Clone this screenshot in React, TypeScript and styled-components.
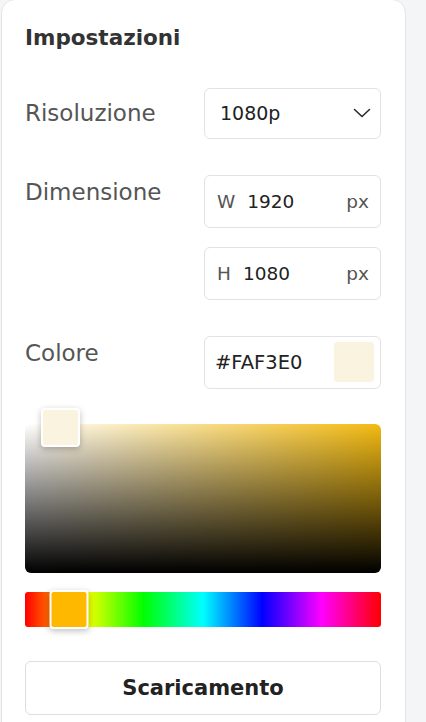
import React from "react";
import styled, { createGlobalStyle } from "styled-components";

const GlobalStyle = createGlobalStyle`
  html, body {
    margin: 0;
    padding: 0;
    background: #f4f5f6;
    font-family: "DejaVu Sans", "Noto Sans", sans-serif;
    overflow: hidden;
  }
  * { box-sizing: border-box; }
`;

const HUE = 44;

export default function App() {
    return (
        <Page>
            <GlobalStyle />
            <Card>
                <Title>Impostazioni</Title>

                <Row $align="center">
                    <Label>Risoluzione</Label>
                    <Select>
                        <Value $size={19}>1080p</Value>
                        <Chevron width="18" height="10" viewBox="0 0 18 10">
                            <path d="M1.5 1.5 L9 8.5 L16.5 1.5" fill="none" stroke="#2a2a2a" strokeWidth="1.6" strokeLinecap="round" strokeLinejoin="round" />
                        </Chevron>
                    </Select>
                </Row>

                <Row $gap={36}>
                    <Label $top>Dimensione</Label>
                    <FieldStack>
                        <Field>
                            <Prefix>W</Prefix>
                            <Value>1920</Value>
                            <Unit>px</Unit>
                        </Field>
                        <Field>
                            <Prefix>H</Prefix>
                            <Value>1080</Value>
                            <Unit>px</Unit>
                        </Field>
                    </FieldStack>
                </Row>

                <Row $gap={36}>
                    <Label $top>Colore</Label>
                    <ColorField>
                        <HexValue>#FAF3E0</HexValue>
                        <Swatch $color="#FAF3E0" />
                    </ColorField>
                </Row>

                <Picker $hue={HUE}>
                    <PickerHandle $color="#FAF3E0" />
                </Picker>

                <HueBar>
                    <HueHandle style={{ left: `${(HUE / 360) * 100}%` }} $color="#FFB800" />
                </HueBar>

                <DownloadButton>Scaricamento</DownloadButton>
            </Card>
        </Page>
    );
}

const Page = styled.div`
    width: 426px;
    height: 722px;
    padding-left: 1px;
    overflow: hidden;
    background: #f4f5f6;
`;

const Card = styled.div`
    width: 405px;
    height: 760px;
    margin-top: -1px;
    background: #ffffff;
    border: 1px solid #e4e5e6;
    border-radius: 14px;
    padding: 25px 24px 0 23px;
`;

const Title = styled.h2`
    margin: 0;
    font-size: 21.5px;
    line-height: 26px;
    font-weight: 700;
    color: #333333;
`;

const Row = styled.div<{ $align?: string; $gap?: number }>`
    display: grid;
    grid-template-columns: 179px 1fr;
    align-items: ${p => p.$align || "start"};
    margin-top: ${p => p.$gap ?? 36.5}px;
`;

const Label = styled.div<{ $top?: boolean }>`
    font-size: 23px;
    line-height: 28px;
    color: #555555;
    padding-top: ${p => (p.$top ? 3 : 0)}px;
`;

const Box = styled.div`
    display: flex;
    align-items: center;
    height: 53px;
    background: #ffffff;
    border: 1px solid #e2e2e2;
    border-radius: 6px;
`;

const Select = styled(Box)`
    height: 51px;
    padding: 0 9px 0 15px;
    justify-content: space-between;
`;

const Chevron = styled.svg`
    display: block;
`;

const FieldStack = styled.div`
    display: flex;
    flex-direction: column;
    gap: 19px;
`;

const Field = styled(Box)`
    padding: 0 11px 0 12px;
`;

const Value = styled.span<{ $size?: number }>`
    font-size: ${p => p.$size ?? 18.5}px;
    color: #222222;
`;

const Prefix = styled.span`
    font-size: 18.5px;
    color: #555555;
    margin-right: 12px;
`;

const Unit = styled.span`
    margin-left: auto;
    font-size: 18.5px;
    color: #555555;
`;

const ColorField = styled(Box)`
    padding: 0 6px 0 10px;
    justify-content: space-between;
`;

const HexValue = styled.span`
    font-size: 19.5px;
    color: #222222;
`;

const Swatch = styled.div<{ $color: string }>`
    width: 40px;
    height: 40px;
    border-radius: 4px;
    background: ${p => p.$color};
`;

const Picker = styled.div<{ $hue: number }>`
    position: relative;
    height: 149px;
    margin-top: 35.5px;
    border-radius: 6px;
    background:
        linear-gradient(to top, #000000, rgba(0, 0, 0, 0)),
        linear-gradient(to right, #ffffff, hsl(${p => p.$hue + 1}, 90%, 51%));
`;

const Handle = styled.div<{ $color: string }>`
    position: absolute;
    width: 39px;
    height: 39px;
    border: 2px solid #ffffff;
    border-radius: 4px;
    background: ${p => p.$color};
    box-shadow: 0 2px 6px rgba(0, 0, 0, 0.25);
`;

const PickerHandle = styled(Handle)`
    left: 16px;
    top: -16px;
`;

const HueBar = styled.div`
    position: relative;
    height: 35px;
    margin-top: 19px;
    border-radius: 3px;
    background: linear-gradient(
        to right,
        #ff0000 0%,
        #ffff00 16.66%,
        #00ff00 33.33%,
        #00ffff 50%,
        #0000ff 66.66%,
        #ff00ff 83.33%,
        #ff0000 100%
    );
`;

const HueHandle = styled(Handle)`
    top: -2px;
    transform: translateX(-50%);
`;

const DownloadButton = styled.button`
    display: block;
    width: 100%;
    height: 54px;
    margin-top: 34px;
    background: #ffffff;
    border: 1px solid #dedede;
    border-radius: 6px;
    font-family: "DejaVu Sans", "Noto Sans", sans-serif;
    font-size: 21px;
    font-weight: 700;
    color: #222222;
`;
